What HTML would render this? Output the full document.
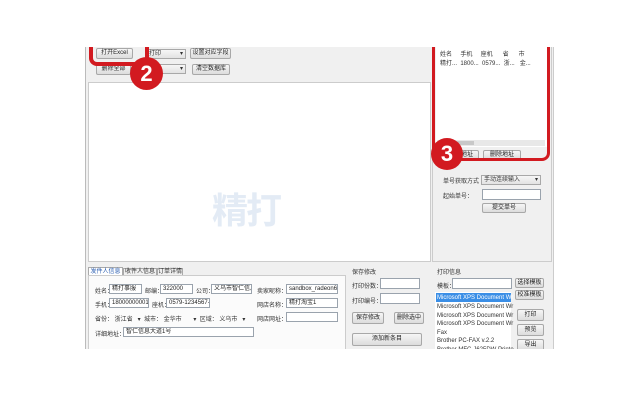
<!DOCTYPE html>
<html><head><meta charset="utf-8"><style>
*{margin:0;padding:0;box-sizing:border-box}
body{width:640px;height:400px;background:#fff;position:relative;overflow:hidden;font-family:"Liberation Sans","Noto Sans CJK SC",sans-serif;font-size:6.5px;color:#333}
.a{position:absolute}
.btn{position:absolute;background:linear-gradient(#f6f6f6,#dcdcdc);border:1px solid #a8a8a8;border-radius:2px;text-align:center;line-height:9px;font-size:6px;color:#222}
.inp{position:absolute;background:#fff;border:1px solid #9aa3ad;font-size:6px;line-height:9px;padding-left:2px;white-space:nowrap;overflow:hidden;color:#222}
.dd{position:absolute;background:linear-gradient(#f6f6f6,#e2e2e2);border:1px solid #a8a8a8;font-size:6px;line-height:8px;padding-left:2px}
.dd:after{content:"▾";position:absolute;right:2px;top:0;font-size:6px}
.t{position:absolute;font-size:6px;white-space:nowrap;color:#333}
</style></head><body>
<div class="a" style="left:85px;top:40px;width:469px;height:309px;background:#f0f0f0;border-left:1px solid #bbb;border-right:1px solid #ccc"></div>
<div class="btn" style="left:96px;top:48px;width:37px;height:11px">打开Excel</div>
<div class="btn" style="left:96px;top:64px;width:35px;height:11px">删除全部</div>
<div class="dd" style="left:146px;top:49px;width:40px;height:10px">打印</div>
<div class="dd" style="left:146px;top:64px;width:40px;height:10px"></div>
<div class="btn" style="left:190px;top:48px;width:41px;height:11px">设置对应字段</div>
<div class="btn" style="left:192px;top:64px;width:38px;height:11px">清空数据库</div>
<div class="a" style="left:88px;top:82px;width:343px;height:180px;background:#fff;border:1px solid #ccc"></div>
<div class="a" style="left:212px;top:186px;font-size:36px;font-weight:bold;color:#e3ebf5;letter-spacing:-2px;line-height:50px">精打</div>
<div class="a" style="left:432px;top:40px;width:120px;height:222px;background:#f0f0f0;border:1px solid #ccc"></div>
<div class="a" style="left:436px;top:40px;width:111px;height:107px;background:#fff"></div>
<div class="t" style="left:440px;top:49px">姓名&nbsp;&nbsp;&nbsp;&nbsp;&nbsp;手机&nbsp;&nbsp;&nbsp;&nbsp;&nbsp;座机&nbsp;&nbsp;&nbsp;&nbsp;&nbsp;&nbsp;省&nbsp;&nbsp;&nbsp;&nbsp;&nbsp;&nbsp;市</div>
<div class="t" style="left:440px;top:58px">精打...&nbsp;&nbsp;1800...&nbsp;&nbsp;0579...&nbsp;&nbsp;浙...&nbsp;&nbsp;&nbsp;金...</div>
<div class="a" style="left:437px;top:140px;width:108px;height:6px;background:#e8e8e8"></div>
<div class="a" style="left:452px;top:141px;width:22px;height:4px;background:#c8c8c8"></div>
<div class="btn" style="left:455px;top:150px;width:24px;height:10px">地址</div>
<div class="btn" style="left:483px;top:150px;width:38px;height:10px">删除地址</div>
<div class="a" style="left:432px;top:30px;width:118px;height:131px;border:3px solid #d21a20;border-radius:8px"></div>
<div class="a" style="left:431px;top:138px;width:32px;height:32px;border-radius:50%;background:#d21a20;color:#fff;font-size:22px;font-weight:bold;text-align:center;line-height:32px">3</div>
<div class="t" style="left:443px;top:176px">单号获取方式</div>
<div class="dd" style="left:481px;top:175px;width:60px;height:10px">手动连续输入</div>
<div class="t" style="left:443px;top:191px">起始单号：</div>
<div class="inp" style="left:482px;top:189px;width:59px;height:11px"></div>
<div class="btn" style="left:482px;top:203px;width:44px;height:10px">提交单号</div>
<div class="a" style="left:89px;top:20px;width:60px;height:46px;border-left:4px solid #d21a20;border-right:4px solid #d21a20;border-bottom:4px solid #d21a20;border-bottom-left-radius:8px"></div>
<div class="a" style="left:130px;top:57px;width:33px;height:33px;border-radius:50%;background:#d21a20;color:#fff;font-size:22px;font-weight:bold;text-align:center;line-height:33px">2</div>
<div class="a" style="left:88px;top:267px;width:35px;height:9px;background:#fff;border:1px solid #aaa;border-bottom:none;color:#2a5db0;font-size:6px;line-height:8px;text-align:center">发件人信息</div>
<div class="a" style="left:123px;top:268px;width:34px;height:8px;border:1px solid #aaa;border-bottom:none;font-size:6px;line-height:7px;text-align:center">收件人信息</div>
<div class="a" style="left:157px;top:268px;width:26px;height:8px;border:1px solid #aaa;border-bottom:none;font-size:6px;line-height:7px;text-align:center">订单详情</div>
<div class="a" style="left:88px;top:275px;width:258px;height:74px;background:#fbfbfb;border:1px solid #ccc;border-bottom:none"></div>
<div class="t" style="left:95px;top:286px">姓名：</div><div class="inp" style="left:109px;top:284px;width:33px;height:10px">精打事服</div>
<div class="t" style="left:145px;top:286px">邮编：</div><div class="inp" style="left:160px;top:284px;width:33px;height:10px">322000</div>
<div class="t" style="left:196px;top:286px">公司：</div><div class="inp" style="left:211px;top:284px;width:41px;height:10px">义乌市智仁信息</div>
<div class="t" style="left:257px;top:286px">卖家昵称：</div><div class="inp" style="left:286px;top:284px;width:52px;height:10px">sandbox_radeon6</div>
<div class="t" style="left:95px;top:300px">手机：</div><div class="inp" style="left:109px;top:298px;width:40px;height:10px">18000000001</div>
<div class="t" style="left:152px;top:300px">座机：</div><div class="inp" style="left:166px;top:298px;width:44px;height:10px">0579-1234567-</div>
<div class="t" style="left:257px;top:300px">网店名称：</div><div class="inp" style="left:286px;top:298px;width:52px;height:10px">精打淘宝1</div>
<div class="t" style="left:95px;top:314px">省份：&nbsp;浙江省&nbsp;&nbsp;&nbsp;▾&nbsp;&nbsp;城市：&nbsp;金华市&nbsp;&nbsp;&nbsp;&nbsp;&nbsp;&nbsp;&nbsp;▾&nbsp;&nbsp;区域：&nbsp;义乌市&nbsp;&nbsp;&nbsp;▾</div>
<div class="t" style="left:257px;top:314px">网店网址：</div><div class="inp" style="left:286px;top:312px;width:52px;height:10px"></div>
<div class="t" style="left:95px;top:329px">详细地址：</div><div class="inp" style="left:123px;top:327px;width:131px;height:10px">智仁信息大道1号</div>
<div class="t" style="left:352px;top:267px">保存修改</div>
<div class="t" style="left:352px;top:281px">打印份数：</div><div class="inp" style="left:380px;top:278px;width:40px;height:11px"></div>
<div class="t" style="left:352px;top:296px">打印编号：</div><div class="inp" style="left:380px;top:293px;width:40px;height:11px"></div>
<div class="btn" style="left:352px;top:312px;width:32px;height:12px;line-height:10px">保存修改</div>
<div class="btn" style="left:394px;top:312px;width:30px;height:12px;line-height:10px">删除选中</div>
<div class="btn" style="left:352px;top:333px;width:70px;height:13px;line-height:11px">添加新条目</div>
<div class="t" style="left:437px;top:267px">打印信息</div>
<div class="t" style="left:437px;top:281px">模板：</div><div class="inp" style="left:452px;top:278px;width:60px;height:11px"></div>
<div class="btn" style="left:515px;top:278px;width:29px;height:10px">选择模板</div>
<div class="btn" style="left:515px;top:290px;width:29px;height:10px">校准模板</div>
<div class="a" style="left:435px;top:292px;width:76px;height:57px;background:#fff"></div>
<div class="a" style="left:436px;top:293px;width:75px;height:9px;background:#3a8ee6"></div>
<div class="t" style="left:437px;top:294px;color:#fff;line-height:8px">Microsoft XPS Document Wr</div>
<div class="t" style="left:437px;top:303px;line-height:8.5px">Microsoft XPS Document Wr<br>Microsoft XPS Document Wr<br>Microsoft XPS Document Wr<br>Fax<br>Brother PC-FAX v.2.2<br>Brother MFC-J625DW Printe</div>
<div class="btn" style="left:517px;top:309px;width:27px;height:12px;line-height:10px">打印</div>
<div class="btn" style="left:517px;top:324px;width:27px;height:12px;line-height:10px">预览</div>
<div class="btn" style="left:517px;top:339px;width:27px;height:12px;line-height:10px">导出</div>
<div class="a" style="left:0;top:349px;width:640px;height:51px;background:#fff"></div>
<div class="a" style="left:0;top:0;width:640px;height:47px;background:#fff"></div>
</body></html>
